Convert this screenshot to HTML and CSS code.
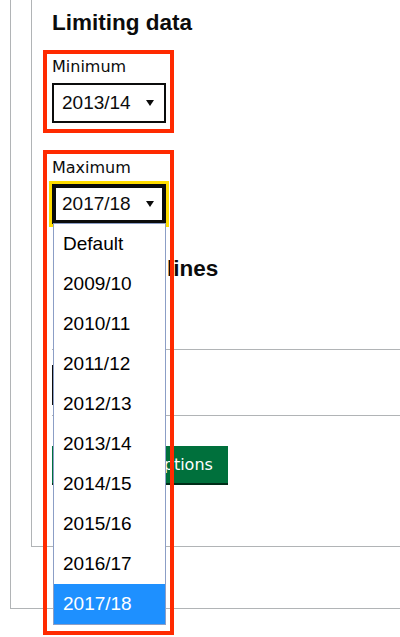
FILE: index.html
```html
<!DOCTYPE html>
<html lang="en">
<head>
<meta charset="utf-8">
<title>Chart options</title>
<link rel="stylesheet" href="styles.css">
</head>
<body>
<div class="outer">
  <div class="inner">
    <h2 class="heading">Limiting data</h2>
    <div class="group group-min">
      <label class="label">Minimum</label>
      <div class="select">
        <span class="select-value">2013/14</span>
        <svg class="arrow" width="8" height="6" viewBox="0 0 8 6"><path d="M0 0H8L4 6Z" fill="#0b0c0c"/></svg>
      </div>
    </div>
    <div class="group group-max">
      <label class="label">Maximum</label>
      <div class="select select-focus">
        <span class="select-value">2017/18</span>
        <svg class="arrow" width="8" height="6" viewBox="0 0 8 6"><path d="M0 0H8L4 6Z" fill="#0b0c0c"/></svg>
      </div>
    </div>
    <h2 class="heading heading-lines">Reference lines</h2>
    <div class="row">
      <span class="checkbox"></span>
    </div>
    <button class="button" type="button">Update all options</button>
  </div>
</div>

<ul class="listbox">
  <li class="option">Default</li>
  <li class="option">2009/10</li>
  <li class="option">2010/11</li>
  <li class="option">2011/12</li>
  <li class="option">2012/13</li>
  <li class="option">2013/14</li>
  <li class="option">2014/15</li>
  <li class="option">2015/16</li>
  <li class="option">2016/17</li>
  <li class="option option-selected">2017/18</li>
</ul>

<div class="annot annot-min"></div>
<div class="annot annot-max"></div>
</body>
</html>
```
FILE: styles.css
```css
* {
  box-sizing: border-box;
}

html, body {
  margin: 0;
  padding: 0;
  background: #ffffff;
}

body {
  position: relative;
  width: 400px;
  height: 637px;
  overflow: hidden;
  font-family: "DejaVu Sans", sans-serif;
  color: #0b0c0c;
}

.outer {
  margin-left: 10px;
  width: 560px;
  border-left: 1px solid #b1b4b6;
  border-bottom: 1px solid #b1b4b6;
  padding: 0 0 61px 20px;
}

.inner {
  border-left: 1px solid #b1b4b6;
  border-bottom: 1px solid #b1b4b6;
  padding: 10px 0 63px 20px;
}

.heading {
  margin: 0;
  font-family: "Liberation Sans", Arial, sans-serif;
  font-weight: 700;
  font-size: 22.5px;
  line-height: 26px;
}

.group {
  display: flex;
  flex-direction: column;
  align-items: flex-start;
}

.group-min {
  margin-top: 21px;
}

.group-max {
  margin-top: 35px;
}

.label {
  font-size: 16px;
  line-height: 20px;
  margin-bottom: 6px;
}

.select {
  display: flex;
  align-items: center;
  justify-content: space-between;
  width: 114px;
  height: 40px;
  border: 2px solid #0b0c0c;
  padding: 0 10px 0 8px;
  font-family: "Liberation Sans", Arial, sans-serif;
  font-size: 19px;
  color: #0b0c0c;
  background: #ffffff;
}

.select-focus {
  outline: 3px solid #ffdd00;
  box-shadow: inset 0 0 0 2px #0b0c0c;
}

.arrow {
  display: block;
  width: 8px;
  height: 6px;
}

.heading-lines {
  margin-top: 32px;
}

.row {
  margin-top: 67px;
  border-top: 1px solid #b1b4b6;
  border-bottom: 1px solid #b1b4b6;
  padding: 15px 0 10px 0;
}

.checkbox {
  display: block;
  width: 40px;
  height: 40px;
  border: 2px solid #0b0c0c;
  background: #ffffff;
}

.button {
  display: block;
  margin-top: 30px;
  width: 176px;
  height: 37px;
  padding: 0;
  border: 0;
  background: #00703c;
  box-shadow: 0 2px 0 #002d18;
  color: #ffffff;
  font-family: "DejaVu Sans", sans-serif;
  font-size: 16px;
  text-align: center;
}

.listbox {
  position: absolute;
  left: 53px;
  top: 223px;
  width: 113px;
  margin: 0;
  padding: 0;
  list-style: none;
  border: 1px solid #8c9ec6;
  background: #ffffff;
  font-family: "Liberation Sans", Arial, sans-serif;
  font-size: 19px;
  color: #000000;
}

.option {
  height: 40px;
  line-height: 40px;
  padding-left: 9px;
}

.option-selected {
  background: #1e90ff;
  color: #ffffff;
}

.annot {
  position: absolute;
  left: 43px;
  width: 131px;
  border: 4px solid #ff2a00;
}

.annot-min {
  top: 50px;
  height: 83px;
}

.annot-max {
  top: 150px;
  height: 485px;
}
```
